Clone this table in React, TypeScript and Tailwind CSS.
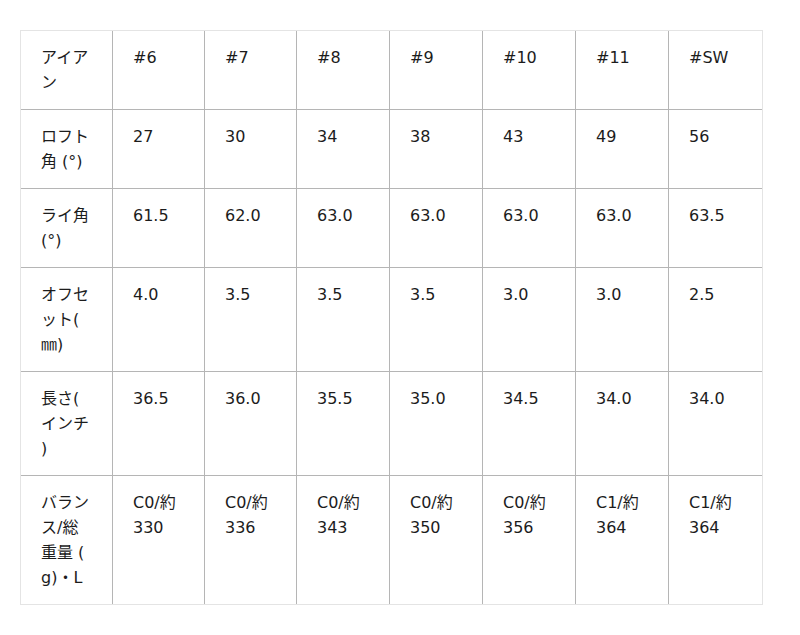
const header = [["アイア", "ン"], "#6", "#7", "#8", "#9", "#10", "#11", "#SW"];

type CellText = string | string[];

const rows: CellText[][] = [
  [["ロフト", "角 (°)"], "27", "30", "34", "38", "43", "49", "56"],
  [["ライ角", "(°)"], "61.5", "62.0", "63.0", "63.0", "63.0", "63.0", "63.5"],
  [["オフセ", "ット(", "㎜)"], "4.0", "3.5", "3.5", "3.5", "3.0", "3.0", "2.5"],
  [["長さ(", "インチ", ")"], "36.5", "36.0", "35.5", "35.0", "34.5", "34.0", "34.0"],
  [
    ["バラン", "ス/総", "重量 (", "g)・L"],
    ["C0/約", "330"],
    ["C0/約", "336"],
    ["C0/約", "343"],
    ["C0/約", "350"],
    ["C0/約", "356"],
    ["C1/約", "364"],
    ["C1/約", "364"],
  ],
];

const colWidths = ["w-[92px]", "w-[92px]", "w-[92px]", "w-[93px]", "w-[93px]", "w-[93px]", "w-[93px]", "w-[93px]"];

const Cell = ({ text, last, lastRow }: { text: CellText; last: boolean; lastRow: boolean }) => {
  const lines = Array.isArray(text) ? text : [text];
  return (
    <td
      className={`align-top px-[20px] py-[14px] text-[16px] leading-[25px] whitespace-nowrap border-[#b5b5b5] ${
        last ? "" : "border-r"
      } ${lastRow ? "" : "border-b"}`}
    >
      {lines.map((line, i) => (
        <div key={i}>{line}</div>
      ))}
    </td>
  );
};

export default function App() {
  const allRows: CellText[][] = [header, ...rows];
  return (
    <div
      className="min-h-screen bg-white pt-[30px] pl-[20px] text-[#1c1c1c]"
      style={{ fontFamily: '"DejaVu Sans", "Noto Sans CJK JP", sans-serif' }}
    >
      <table className="table-fixed w-[743px] border-separate border-spacing-0 border border-[#e4e4e4]">
        <colgroup>
          {colWidths.map((w, i) => (
            <col key={i} className={w} />
          ))}
        </colgroup>
        <tbody>
          {allRows.map((row, r) => (
            <tr key={r}>
              {row.map((text, c) => (
                <Cell
                  key={c}
                  text={text}
                  last={c === row.length - 1}
                  lastRow={r === allRows.length - 1}
                />
              ))}
            </tr>
          ))}
        </tbody>
      </table>
    </div>
  );
}
